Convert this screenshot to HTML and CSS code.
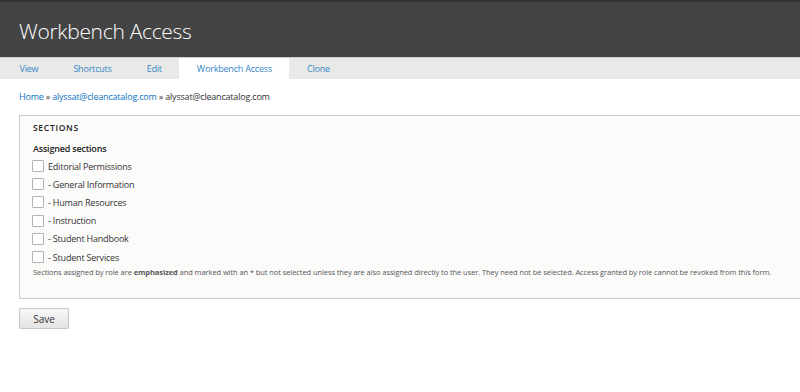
FILE: index.html
```html
<!DOCTYPE html>
<html>
<head>
<meta charset="utf-8">
<link rel="stylesheet" href="styles.css">
</head>
<body>
<header class="branding">
  <h1 class="page-title">Workbench Access</h1>
</header>
<nav class="tabs">
  <a class="tab" href="#">View</a>
  <a class="tab" href="#">Shortcuts</a>
  <a class="tab" href="#">Edit</a>
  <a class="tab active" href="#">Workbench Access</a>
  <a class="tab" href="#">Clone</a>
</nav>
<main class="content">
  <div class="breadcrumb"><a href="#">Home</a> » <a href="#">alyssat@cleancatalog.com</a> » alyssat@cleancatalog.com</div>
  <fieldset class="sections">
    <legend class="legend">Sections</legend>
    <div class="field-label">Assigned sections</div>
    <div class="options">
      <label class="option"><span class="box"></span>Editorial Permissions</label>
      <label class="option"><span class="box"></span>- General Information</label>
      <label class="option"><span class="box"></span>- Human Resources</label>
      <label class="option"><span class="box"></span>- Instruction</label>
      <label class="option"><span class="box"></span>- Student Handbook</label>
      <label class="option"><span class="box"></span>- Student Services</label>
    </div>
    <div class="description">Sections assigned by role are <strong>emphasized</strong> and marked with an * but not selected unless they are also assigned directly to the user. They need not be selected. Access granted by role cannot be revoked from this form.</div>
  </fieldset>
  <button class="save">Save</button>
</main>
</body>
</html>
```
FILE: styles.css
```css
html, body { margin: 0; padding: 0; }
body {
  font-family: "Open Sans", "Liberation Sans", sans-serif;
  color: #333;
  background: #fff;
  overflow: hidden;
}
a { color: #0f74bf; text-decoration: none; }
.branding {
  background: #444;
  border-top: 2px solid #333;
  height: 55px;
  box-sizing: content-box;
  padding: 0 19px;
  display: flex;
  align-items: center;
}
.page-title {
  margin: 0;
  color: #fff;
  font-size: 21px;
  font-weight: 300;
  letter-spacing: -0.3px;
  padding-top: 3px;
}
.tabs {
  background: #e9e9e7;
  height: 21px;
  display: flex;
  padding-left: 2px;
  border-top: 1px solid #ccc;
}
.tab {
  font-size: 9px;
  letter-spacing: -0.2px;
  line-height: 21px;
  padding: 0 17.5px;
  color: #3688c8;
}
.tab.active { background: #fff; }
.content { padding: 11px 0 0 19px; }
.breadcrumb {
  font-size: 9px;
  letter-spacing: -0.2px;
  color: #333;
  line-height: 14px;
}
.sections {
  margin: 11px 0 0 0;
  border: 1px solid #ccc;
  border-right: none;
  background: #fbfbfa;
  padding: 5px 13px 20px;
  height: 184px;
  box-sizing: border-box;
}
.legend {
  float: left;
  padding: 0;
  font-size: 8.5px;
  font-weight: 600;
  letter-spacing: 0.7px;
  text-transform: uppercase;
  color: #222;
  line-height: 14px;
  width: 100%;
}
.field-label {
  clear: both;
  font-size: 9px;
  letter-spacing: -0.2px;
  font-weight: 600;
  color: #222;
  padding-top: 6px;
  line-height: 15px;
}
.options { display: flex; flex-direction: column; margin-top: 1px; }
.option {
  display: flex;
  align-items: center;
  font-size: 9px;
  letter-spacing: -0.2px;
  height: 18.2px;
  color: #333;
}
.box {
  width: 10px;
  height: 10px;
  border: 1px solid #b3b3b3;
  background: #fff;
  margin-right: 4px;
  margin-left: -1px;
  border-radius: 1px;
  flex: none;
}
.description {
  font-size: 7.5px;
  letter-spacing: -0.08px;
  color: #555;
  margin-top: 1px;
}
.save {
  margin-top: 9px;
  width: 50px;
  height: 21px;
  font-family: inherit;
  font-size: 10px;
  color: #333;
  border: 1px solid #c8c8c8;
  background: linear-gradient(#f8f8f8, #e4e4e4);
  border-radius: 1px;
  padding: 0;
}
```
